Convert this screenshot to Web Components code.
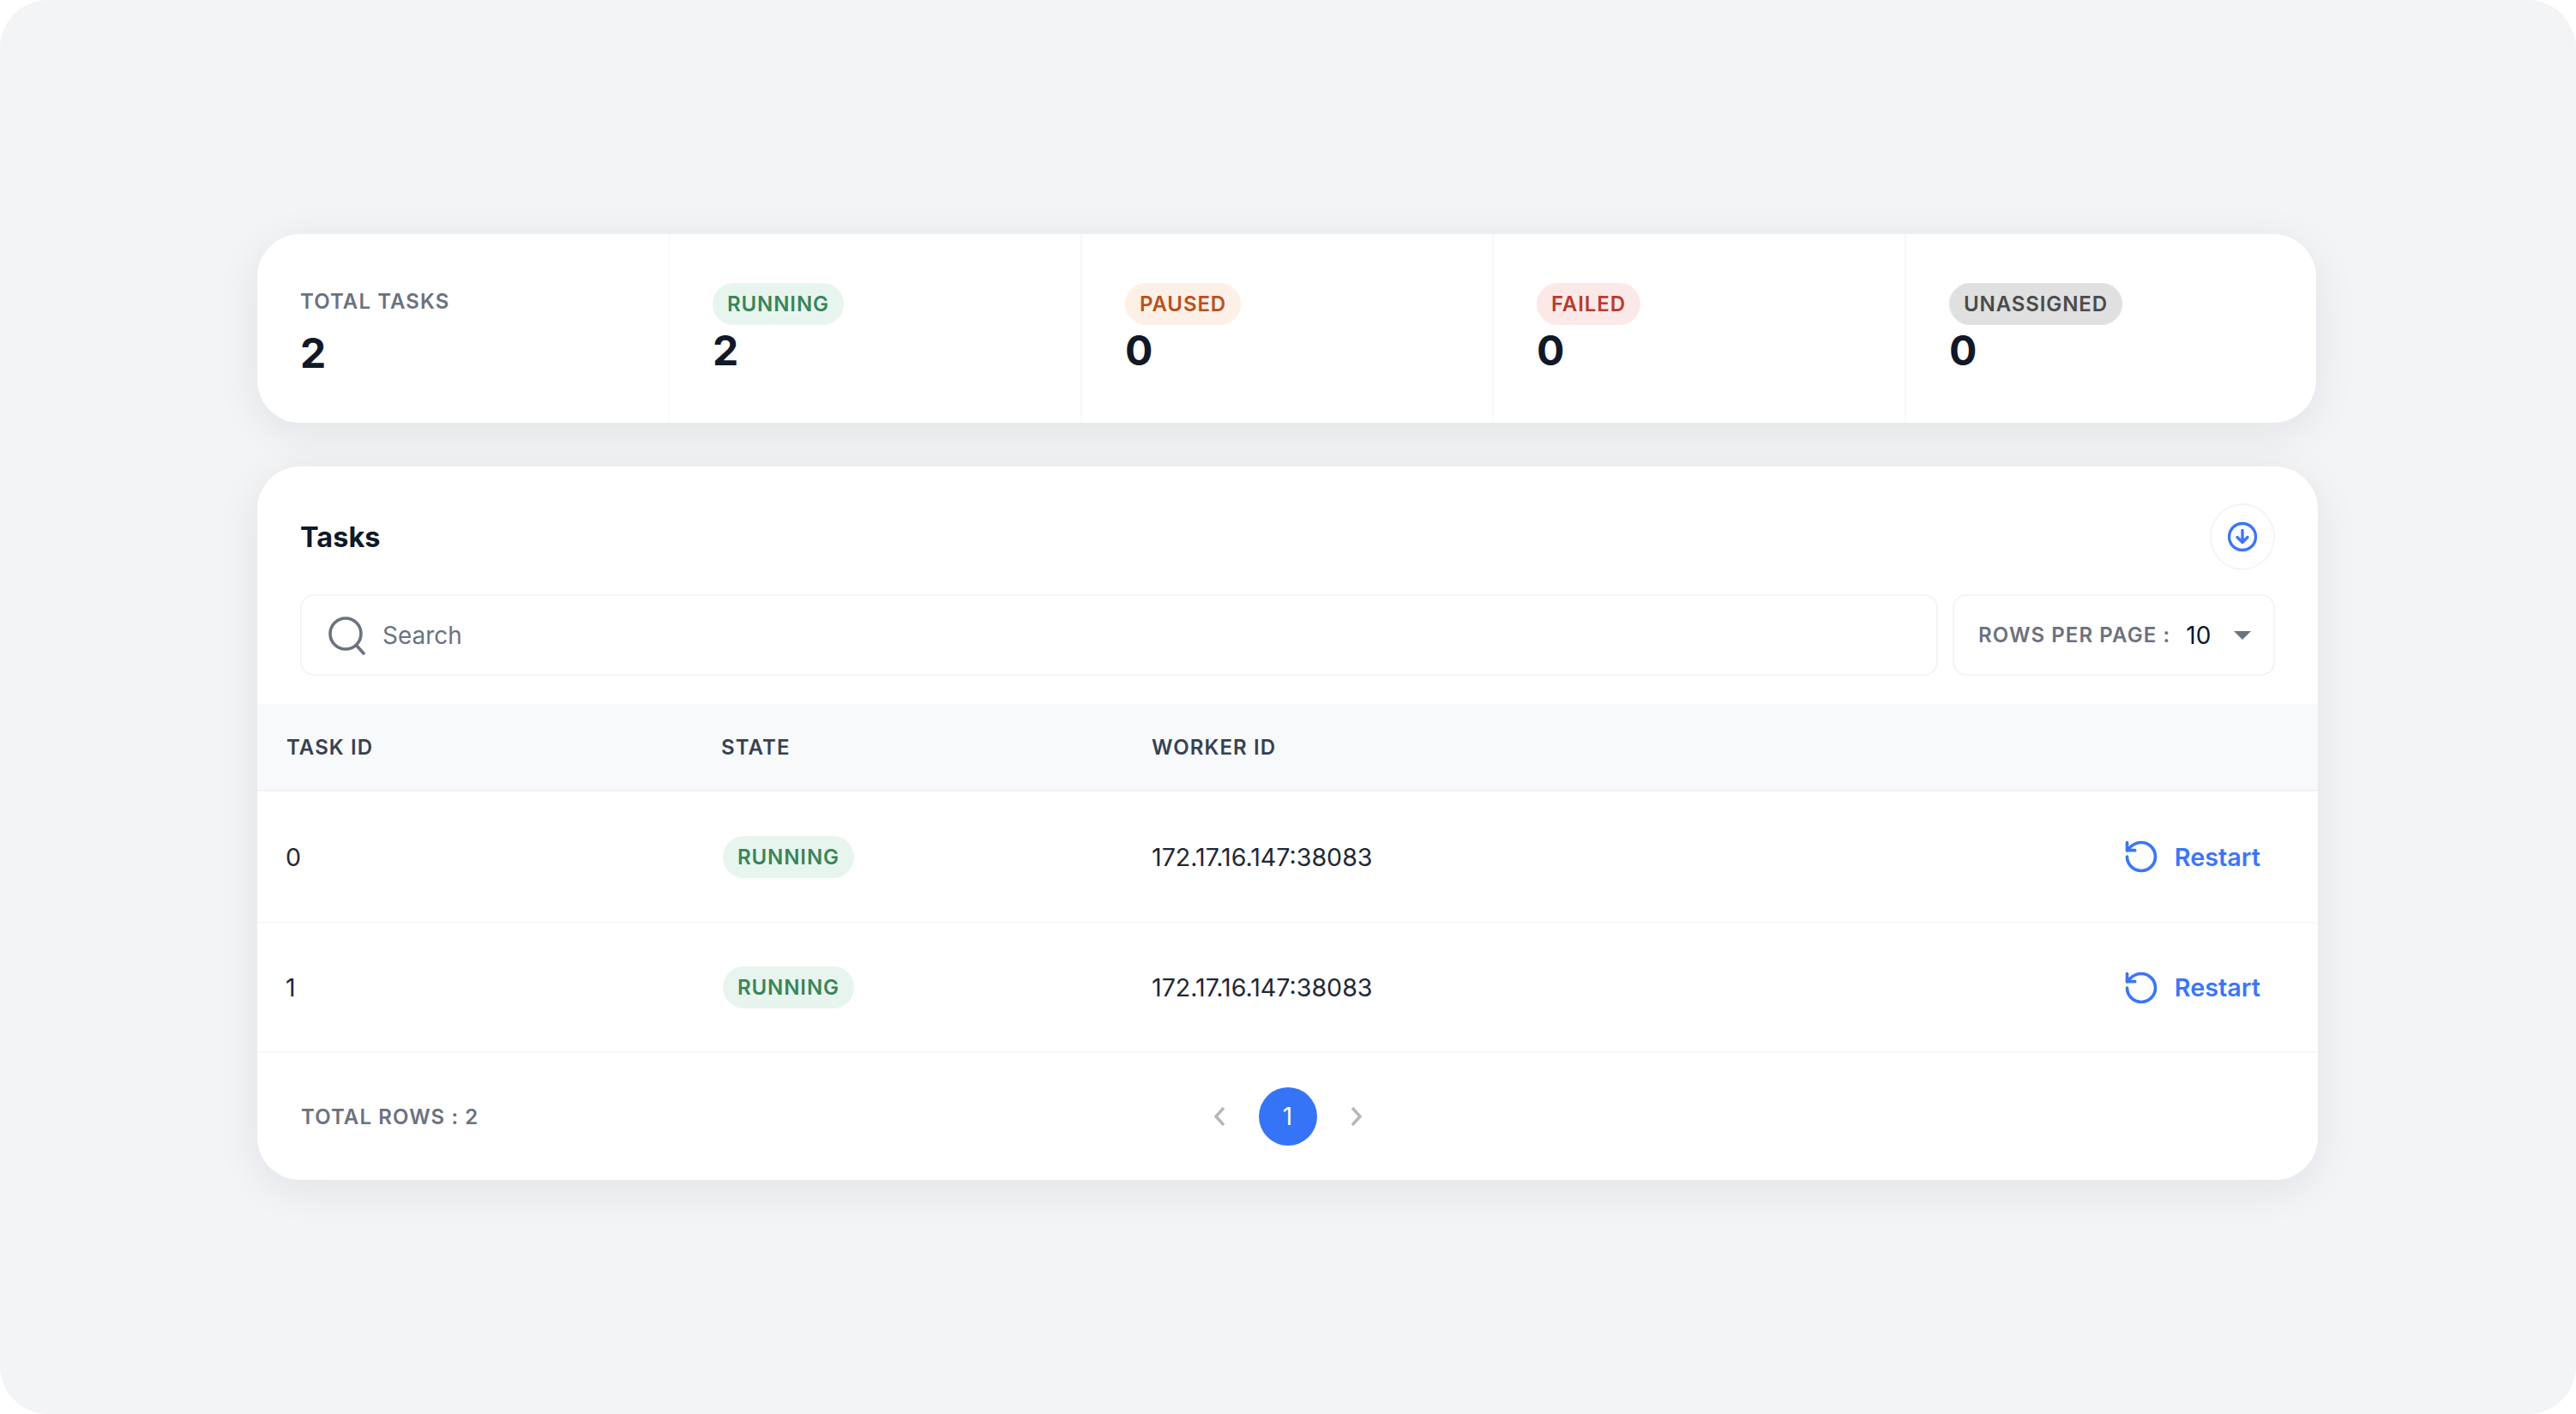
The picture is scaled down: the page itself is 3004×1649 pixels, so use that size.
<!DOCTYPE html>
<html lang="en">
<head>
<meta charset="utf-8">
<title>Tasks</title>
<style>
  html, body { margin: 0; padding: 0; background: #fff; }
  body { font-family: Inter, "Liberation Sans", sans-serif; }
</style>
</head>
<body>
<app-frame>
  <stat-summary>
    <stat-cell value="2"><span slot="label" class="plain">TOTAL TASKS</span></stat-cell>
    <stat-cell value="2"><status-badge slot="label" state="running">RUNNING</status-badge></stat-cell>
    <stat-cell value="0"><status-badge slot="label" state="paused">PAUSED</status-badge></stat-cell>
    <stat-cell value="0"><status-badge slot="label" state="failed">FAILED</status-badge></stat-cell>
    <stat-cell value="0"><status-badge slot="label" state="unassigned">UNASSIGNED</status-badge></stat-cell>
  </stat-summary>
  <tasks-card>
    <task-row task="0" worker="172.17.16.147:38083"></task-row>
    <task-row task="1" worker="172.17.16.147:38083" class="short"></task-row>
  </tasks-card>
</app-frame>

<script>
class AppFrame extends HTMLElement {
  constructor() {
    super();
    this.attachShadow({ mode: 'open' }).innerHTML = `
      <style>
        :host {
          display: flex;
          flex-direction: column;
          gap: 51px;
          box-sizing: border-box;
          height: 1649px;
          padding: 273px 0 0 300px;
          background: #f3f4f6;
          border-radius: 56px;
          overflow: hidden;
        }
      </style>
      <slot></slot>
    `;
  }
}

class StatSummary extends HTMLElement {
  constructor() {
    super();
    this.attachShadow({ mode: 'open' }).innerHTML = `
      <style>
        :host {
          display: grid;
          grid-template-columns: 481px 481px 480px 481px 478px;
          width: 2401px;
          height: 220px;
          background: #fff;
          border-radius: 50px;
          box-shadow: 0 10px 50px rgba(17, 24, 39, 0.08);
          overflow: hidden;
        }
      </style>
      <slot></slot>
    `;
  }
}

class StatCell extends HTMLElement {
  constructor() {
    super();
    this.attachShadow({ mode: 'open' }).innerHTML = `
      <style>
        :host {
          display: flex;
          flex-direction: column;
          align-items: flex-start;
          box-sizing: border-box;
          padding: 57px 0 0 50px;
          border-right: 2px solid #f7f8f9;
        }
        :host(:first-child) { padding-top: 64px; }
        :host(:last-child) { border-right: 0; }
        .value {
          margin-top: 2px;
          font-size: 48px;
          line-height: 56px;
          font-weight: 700;
          color: #111827;
        }
        :host(:first-child) .value { margin-top: 17px; }
        ::slotted(.plain) {
          font-size: 24px;
          line-height: 30px;
          font-weight: 600;
          letter-spacing: 1.1px;
          color: #6b7280;
        }
      </style>
      <slot name="label"></slot>
      <div class="value"></div>
    `;
  }
  connectedCallback() {
    this.shadowRoot.querySelector('.value').textContent = this.getAttribute('value');
  }
}

class StatusBadge extends HTMLElement {
  constructor() {
    super();
    this.attachShadow({ mode: 'open' }).innerHTML = `
      <style>
        :host {
          display: inline-flex;
          align-items: center;
          box-sizing: border-box;
          height: 49px;
          padding: 0 17px;
          border-radius: 25px;
          font-size: 24px;
          font-weight: 600;
          letter-spacing: 0.9px;
          white-space: nowrap;
        }
        :host([state="running"]) { background: #e8f5ee; color: #38855b; }
        :host([state="paused"]) { background: #fdf0e6; color: #b7521f; }
        :host([state="failed"]) { background: #fbe9e7; color: #b83b2e; }
        :host([state="unassigned"]) { background: #e0e0e0; color: #4b4b4b; }
      </style>
      <slot></slot>
    `;
  }
}

class RestartButton extends HTMLElement {
  constructor() {
    super();
    this.attachShadow({ mode: 'open' }).innerHTML = `
      <style>
        :host {
          display: inline-flex;
          align-items: center;
          gap: 17px;
          font-size: 28.8px;
          font-weight: 600;
          color: #3b76f6;
        }
        svg { width: 44px; height: 44px; display: block; }
      </style>
      <svg viewBox="0 0 24 24" fill="none" stroke="#3b76f6" stroke-width="2" stroke-linecap="round" stroke-linejoin="round">
        <path d="M3 12a9 9 0 1 0 9-9 9.75 9.75 0 0 0-6.74 2.74L3 8"/>
        <path d="M3 3v5h5"/>
      </svg>
      <span>Restart</span>
    `;
  }
}

class TaskRow extends HTMLElement {
  constructor() {
    super();
    this.attachShadow({ mode: 'open' }).innerHTML = `
      <style>
        :host {
          display: grid;
          grid-template-columns: 510px 500px 1fr auto;
          align-items: center;
          box-sizing: border-box;
          height: 154px;
          padding: 0 67px 0 33px;
          border-bottom: 2px solid #f6f7f8;
          font-size: 28.6px;
          color: #1f2937;
        }
        :host(.short) { height: 151px; }
      </style>
      <div class="id"></div>
      <div><status-badge state="running">RUNNING</status-badge></div>
      <div class="worker"></div>
      <restart-button></restart-button>
    `;
  }
  connectedCallback() {
    this.shadowRoot.querySelector('.id').textContent = this.getAttribute('task');
    this.shadowRoot.querySelector('.worker').textContent = this.getAttribute('worker');
  }
}

class TablePager extends HTMLElement {
  constructor() {
    super();
    this.attachShadow({ mode: 'open' }).innerHTML = `
      <style>
        :host {
          display: flex;
          align-items: center;
          justify-content: center;
          gap: 36px;
        }
        svg { width: 20px; height: 28px; display: block; }
        .page {
          width: 68px;
          height: 68px;
          border-radius: 50%;
          background: #3574f6;
          color: #fff;
          font-size: 28px;
          display: flex;
          align-items: center;
          justify-content: center;
        }
      </style>
      <svg viewBox="0 0 20 28" fill="none" stroke="#b4b7bb" stroke-width="3.4"><path d="M15 4 6 14l9 10"/></svg>
      <div class="page">1</div>
      <svg viewBox="0 0 20 28" fill="none" stroke="#b4b7bb" stroke-width="3.4"><path d="M5 4l9 10-9 10"/></svg>
    `;
  }
}

class TasksCard extends HTMLElement {
  constructor() {
    super();
    this.attachShadow({ mode: 'open' }).innerHTML = `
      <style>
        :host {
          display: flex;
          flex-direction: column;
          width: 2403px;
          height: 832px;
          background: #fff;
          border-radius: 50px;
          box-shadow: 0 10px 50px rgba(17, 24, 39, 0.08);
          overflow: hidden;
        }
        .head {
          display: flex;
          align-items: center;
          justify-content: space-between;
          padding: 43px 50px 0 50px;
        }
        h2 {
          margin: 0;
          font-size: 32.5px;
          font-weight: 700;
          color: #111827;
        }
        .download {
          box-sizing: border-box;
          width: 76px;
          height: 78px;
          border: 2px solid #f3f4f6;
          border-radius: 50%;
          display: flex;
          align-items: center;
          justify-content: center;
        }
        .download svg { width: 38px; height: 38px; display: block; }
        .tools {
          display: flex;
          gap: 17px;
          margin: 28px 50px 33px 50px;
        }
        .box {
          box-sizing: border-box;
          height: 95px;
          border: 2px solid #f3f4f6;
          border-radius: 16px;
          display: flex;
          align-items: center;
        }
        .search {
          flex: 1;
          padding-left: 30px;
          gap: 20px;
          font-size: 28px;
          color: #6b7280;
        }
        .search svg { width: 44px; height: 46px; display: block; }
        .rows {
          width: 376px;
          padding-left: 28px;
          font-size: 24px;
          font-weight: 600;
          letter-spacing: 1.1px;
          color: #6b7280;
        }
        .rows b {
          margin-left: 18px;
          font-size: 28px;
          font-weight: 400;
          letter-spacing: 0;
          color: #111827;
        }
        .caret {
          margin-left: 27px;
          width: 0;
          height: 0;
          border-left: 10px solid transparent;
          border-right: 10px solid transparent;
          border-top: 10px solid #6b7280;
        }
        .thead {
          display: grid;
          grid-template-columns: 507px 502px 1fr;
          align-items: center;
          box-sizing: border-box;
          height: 102px;
          padding-left: 34px;
          background: #f8f9fb;
          border-bottom: 2px solid #f0f1f4;
          font-size: 24px;
          font-weight: 600;
          letter-spacing: 1.1px;
          color: #374151;
        }
        .foot {
          position: relative;
          display: flex;
          align-items: center;
          justify-content: center;
          flex: 1;
        }
        .total {
          position: absolute;
          left: 51px;
          font-size: 24px;
          font-weight: 600;
          letter-spacing: 1.1px;
          color: #6b7280;
        }
      </style>
      <div class="head">
        <h2>Tasks</h2>
        <div class="download">
          <svg viewBox="0 0 38 38" fill="none" stroke="#3b76f6" stroke-width="3.4" stroke-linecap="round" stroke-linejoin="round">
            <circle cx="19" cy="19" r="15.5"/>
            <path d="M19 11.5v14M13 19.5l6 6 6-6"/>
          </svg>
        </div>
      </div>
      <div class="tools">
        <div class="box search">
          <svg viewBox="0 0 44 46" fill="none" stroke="#6b7280" stroke-width="3.6" stroke-linecap="round">
            <circle cx="21" cy="21" r="18"/>
            <path d="M34 35l8 9"/>
          </svg>
          <span>Search</span>
        </div>
        <div class="box rows">
          <span>ROWS PER PAGE :</span>
          <b>10</b>
          <i class="caret"></i>
        </div>
      </div>
      <div class="thead">
        <div>TASK ID</div>
        <div>STATE</div>
        <div>WORKER ID</div>
      </div>
      <slot></slot>
      <div class="foot">
        <div class="total">TOTAL ROWS : 2</div>
        <table-pager></table-pager>
      </div>
    `;
  }
}

customElements.define('app-frame', AppFrame);
customElements.define('stat-summary', StatSummary);
customElements.define('stat-cell', StatCell);
customElements.define('status-badge', StatusBadge);
customElements.define('restart-button', RestartButton);
customElements.define('task-row', TaskRow);
customElements.define('table-pager', TablePager);
customElements.define('tasks-card', TasksCard);
</script>
</body>
</html>
